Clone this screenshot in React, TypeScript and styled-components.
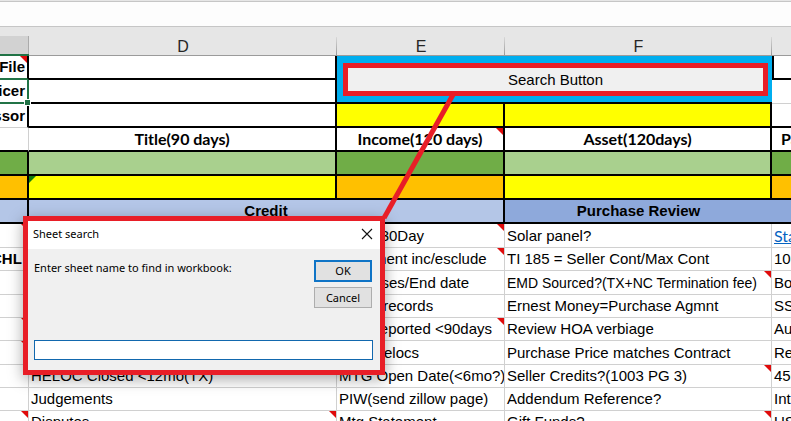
import React from "react";
import styled, { createGlobalStyle, css } from "styled-components";

const RED = "#e81e27";
const GREEN = "#217346";
const GRID = "#d0d0d0";

const GlobalStyle = createGlobalStyle`
  * { box-sizing: border-box; }
  body { margin: 0; background: #fff; color: #000; font-family: "Liberation Sans", Arial, sans-serif; }
  button, input { font: inherit; color: inherit; margin: 0; }
`;

const Workbook = styled.main`
  position: relative;
  height: 100vh;
  overflow: hidden;
`;

const FormulaBar = styled.div`
  height: 27px;
  border-top: 1px solid #e6e6e6;
  border-bottom: 1px solid #c6c6c6;
  background: #fdfdfd;
  box-shadow: inset 0 1px 0 #c6c6c6;
`;

const Sheet = styled.table`
  width: 100%;
  min-width: 900px;
  table-layout: fixed;
  border-collapse: separate;
  border-spacing: 0;
  font-size: 15px;
`;

const ColumnHead = styled.th<{ $selected?: boolean }>`
  height: 29px;
  padding: 11px 0 0;
  font-size: 16px;
  line-height: 17px;
  font-weight: 400;
  color: #262626;
  text-align: center;
  background: ${(p) =>
    p.$selected
      ? "linear-gradient(#ababab, #ababab) right bottom / 1px 18px no-repeat, linear-gradient(#d2d2d2, #d2d2d2) left bottom / 100% 18px no-repeat, #e6e6e6"
      : "linear-gradient(#d8d8d8, #9a9a9a) right bottom / 1px 18px no-repeat, #e6e6e6"};
  border-bottom: ${(p) => (p.$selected ? `2px solid ${GREEN}` : "1px solid #9b9b9b")};
`;

const Row = styled.tr<{ $short?: boolean }>`
  height: ${(p) => (p.$short ? 23 : 24)}px;
`;

type CellProps = {
  $fill?: string;
  $right?: "black" | "green" | "none";
  $bottom?: "black" | "green";
  $left?: boolean;
  $bold?: boolean;
  $title?: boolean;
};

const edge = (kind?: string) =>
  kind === "black"
    ? "2px solid #000"
    : kind === "green"
      ? `2px solid ${GREEN}`
      : kind === "none"
        ? "0"
        : `1px solid ${GRID}`;

const Cell = styled.td<CellProps>`
  position: relative;
  padding: 0;
  vertical-align: middle;
  background: ${(p) => p.$fill ?? "#fff"};
  border-right: ${(p) => edge(p.$right)};
  border-bottom: ${(p) => edge(p.$bottom)};
  ${(p) => p.$left && "border-left: 2px solid #000;"}
  font-weight: ${(p) => (p.$bold || p.$title ? 700 : 400)};
  ${(p) =>
    p.$title &&
    css`
      font-family: Lato, "Open Sans", sans-serif;
      font-size: 16px;
    `}
`;

const CellText = styled.div<{ $align?: "center" | "flex-end"; $shrink?: boolean }>`
  display: flex;
  justify-content: ${(p) => p.$align ?? "flex-start"};
  padding: 0 2px;
  overflow: hidden;
  white-space: pre;
  line-height: 20px;
  ${(p) => p.$shrink && "font-size: 14px;"}
`;

const NoteMark = styled.span`
  position: absolute;
  top: 0;
  right: 0;
  border-top: 7px solid #e00b0b;
  border-left: 7px solid transparent;
`;

const ErrorMark = styled.span`
  position: absolute;
  top: 0;
  left: 0;
  border-top: 7px solid #107c10;
  border-right: 7px solid transparent;
`;

const FillHandle = styled.span`
  position: absolute;
  right: -4px;
  bottom: -4px;
  z-index: 1;
  width: 7px;
  height: 7px;
  background: ${GREEN};
  border: 1px solid #fff;
`;

const SheetLink = styled.a`
  color: #0563c1;
  font-family: Lato, "Open Sans", sans-serif;
  font-size: 16px;
`;

const SearchButton = styled.button`
  display: block;
  width: calc(100% - 10px);
  height: 33px;
  margin: 1px 0 0 6px;
  padding: 0;
  border: 5px solid ${RED};
  background: #f0f0f0;
  font-size: 15px;
  line-height: 20px;
`;

const Connector = styled.svg`
  position: absolute;
  left: 0;
  top: 0;
  z-index: 3;
  pointer-events: none;
`;

const Dialog = styled.section`
  position: absolute;
  left: 23px;
  top: 216px;
  z-index: 2;
  width: 362px;
  border: 5px solid ${RED};
  background: #f0f0f0;
  box-shadow: 0 4px 14px rgba(0, 0, 0, 0.35);
  font-family: "Noto Sans", "Open Sans", sans-serif;
  font-size: 11px;
  line-height: 16px;
`;

const TitleBar = styled.header`
  display: flex;
  align-items: center;
  justify-content: space-between;
  height: 28px;
  padding: 0 7px 3px 5px;
  background: #fff;
`;

const DialogTitle = styled.h2`
  margin: 0;
  font-size: 11px;
  font-weight: 400;
`;

const CloseButton = styled.button`
  display: flex;
  padding: 0;
  border: 0;
  background: none;
`;

const DialogBody = styled.form`
  display: flex;
  flex-direction: column;
  gap: 32px;
  padding: 11px 7px 10px 6px;
`;

const PromptRow = styled.div`
  display: flex;
  justify-content: space-between;
  align-items: flex-start;
  padding-right: 1px;
`;

const Actions = styled.div`
  display: flex;
  flex-direction: column;
  gap: 5px;
  width: 58px;
`;

const DialogButton = styled.button<{ $primary?: boolean }>`
  height: ${(p) => (p.$primary ? 22 : 21)}px;
  padding: 0;
  background: #e1e1e1;
  border: ${(p) => (p.$primary ? "2px solid #0f74c6" : "1px solid #adadad")};
`;

const NameInput = styled.input`
  width: 100%;
  height: 20px;
  padding: 0 4px;
  border: 1px solid #1268ae;
  background: #fff;
  outline: none;
`;

type BodyRow = {
  c?: string;
  d?: string;
  e: string;
  f: string;
  g: string;
  notes?: string;
  short?: boolean;
  link?: boolean;
  shrink?: boolean;
};

const bodyRows: BodyRow[] = [
  { e: "Since 30Day", f: "Solar panel?", g: "Statement", notes: "ce", link: true },
  { c: "CHL\u00a0", e: "Document inc/esclude", f: "TI 185 = Seller Cont/Max Cont", g: "1003", notes: "e", short: true },
  { e: "Expenses/End date", f: "EMD Sourced?(TX+NC Termination fee)", g: "Borrower", notes: "f", shrink: true },
  { e: "Hours records", f: "Ernest Money=Purchase Agmnt", g: "SSN", short: true },
  { e: "Debt reported <90days", f: "Review HOA verbiage", g: "Authorization", notes: "ce", short: true },
  { e: "Paid Helocs", f: "Purchase Price matches Contract", g: "Review", notes: "c" },
  { d: "HELOC Closed <12mo(TX)", e: "MTG Open Date(<6mo?)", f: "Seller Credits?(1003 PG 3)", g: "4506", notes: "f", short: true },
  { d: "Judgements", e: "PIW(send zillow page)", f: "Addendum Reference?", g: "Intent", short: true },
  { d: "Disputes", e: "Mtg Statement", f: "Gift Funds?", g: "US", notes: "cdf", short: true },
];

export default function App() {
  return (
    <Workbook>
      <GlobalStyle />
      <FormulaBar />
      <Sheet>
        <colgroup>
          <col width="29" />
          <col width="308" />
          <col width="168" />
          <col width="267" />
          <col />
        </colgroup>
        <thead>
          <tr>
            <ColumnHead $selected aria-label="C" />
            <ColumnHead>D</ColumnHead>
            <ColumnHead>E</ColumnHead>
            <ColumnHead>F</ColumnHead>
            <ColumnHead aria-label="G" />
          </tr>
        </thead>
        <tbody>
          <Row>
            <Cell $bold $right="black" $bottom="green">
              <CellText $align="flex-end">File</CellText>
              <NoteMark />
            </Cell>
            <Cell $right="black" $bottom="black" />
            <Cell colSpan={2} rowSpan={2} $fill="#00aeef" $right="none" $bottom="black">
              <SearchButton type="button">Search Button</SearchButton>
            </Cell>
            <Cell $left $bottom="black" />
          </Row>
          <Row>
            <Cell $bold $right="green" $bottom="green">
              <CellText $align="flex-end">Officer</CellText>
              <FillHandle />
            </Cell>
            <Cell $right="black" $bottom="black" />
            <Cell />
          </Row>
          <Row>
            <Cell $bold $right="black">
              <CellText $align="flex-end">Processor</CellText>
            </Cell>
            <Cell $right="black" $bottom="black" />
            <Cell $fill="#ffff00" $right="black" $bottom="black" />
            <Cell $fill="#ffff00" $right="black" $bottom="black" />
            <Cell $bottom="black" />
          </Row>
          <Row>
            <Cell $bottom="black" />
            <Cell $title $right="black" $bottom="black">
              <CellText $align="center">Title(90 days)</CellText>
            </Cell>
            <Cell $title $right="black" $bottom="black">
              <CellText $align="center">Income(120 days)</CellText>
              <NoteMark />
            </Cell>
            <Cell $title $right="black" $bottom="black">
              <CellText $align="center">Asset(120days)</CellText>
            </Cell>
            <Cell $title $bottom="black">
              <CellText $align="center">Payoff(90 days)</CellText>
            </Cell>
          </Row>
          <Row>
            <Cell $fill="#70ad47" $right="black" $bottom="black" />
            <Cell $fill="#a9d08e" $right="black" $bottom="black" />
            <Cell $fill="#70ad47" $right="black" $bottom="black" />
            <Cell $fill="#a9d08e" $right="black" $bottom="black" />
            <Cell $fill="#70ad47" $bottom="black" />
          </Row>
          <Row>
            <Cell $fill="#ffc000" $right="black" $bottom="black" />
            <Cell $fill="#ffff00" $right="black" $bottom="black">
              <ErrorMark />
            </Cell>
            <Cell $fill="#ffc000" $right="black" $bottom="black" />
            <Cell $fill="#ffff00" $right="black" $bottom="black" />
            <Cell $fill="#ffc000" $bottom="black" />
          </Row>
          <Row>
            <Cell $fill="#b4c6e7" $right="black" $bottom="black" />
            <Cell colSpan={2} $bold $fill="#b4c6e7" $right="black" $bottom="black">
              <CellText $align="center">Credit</CellText>
            </Cell>
            <Cell $bold $fill="#8ea9db" $right="none" $bottom="black">
              <CellText $align="center">Purchase Review</CellText>
            </Cell>
            <Cell $fill="#8ea9db" $bottom="black" />
          </Row>
          {bodyRows.map((row) => {
            const noted = (column: string) => row.notes?.includes(column) && <NoteMark />;
            return (
              <Row key={row.f} $short={row.short}>
                <Cell $bold>
                  {row.c && <CellText $align="flex-end">{row.c}</CellText>}
                  {noted("c")}
                </Cell>
                <Cell>
                  {row.d && <CellText>{row.d}</CellText>}
                  {noted("d")}
                </Cell>
                <Cell>
                  <CellText>{row.e}</CellText>
                  {noted("e")}
                </Cell>
                <Cell>
                  <CellText $shrink={row.shrink}>{row.f}</CellText>
                  {noted("f")}
                </Cell>
                <Cell>
                  <CellText>{row.link ? <SheetLink href="#statement">{row.g}</SheetLink> : row.g}</CellText>
                </Cell>
              </Row>
            );
          })}
        </tbody>
      </Sheet>

      <Dialog role="dialog" aria-labelledby="search-title">
        <TitleBar>
          <DialogTitle id="search-title">Sheet search</DialogTitle>
          <CloseButton type="button" aria-label="Close">
            <svg width="12" height="12" viewBox="0 0 12 12" fill="none" stroke="#111" strokeWidth="1.1">
              <path d="M1 1 11 11M11 1 1 11" />
            </svg>
          </CloseButton>
        </TitleBar>
        <DialogBody onSubmit={(event) => event.preventDefault()}>
          <PromptRow>
            <label htmlFor="sheet-name">Enter sheet name to find in workbook:</label>
            <Actions>
              <DialogButton $primary type="submit">OK</DialogButton>
              <DialogButton type="button">Cancel</DialogButton>
            </Actions>
          </PromptRow>
          <NameInput id="sheet-name" type="text" />
        </DialogBody>
      </Dialog>

      <Connector width="791" height="421" viewBox="0 0 791 421" aria-hidden="true">
        <path d="M454 93 384 218" stroke={RED} strokeWidth="5" />
      </Connector>
    </Workbook>
  );
}
